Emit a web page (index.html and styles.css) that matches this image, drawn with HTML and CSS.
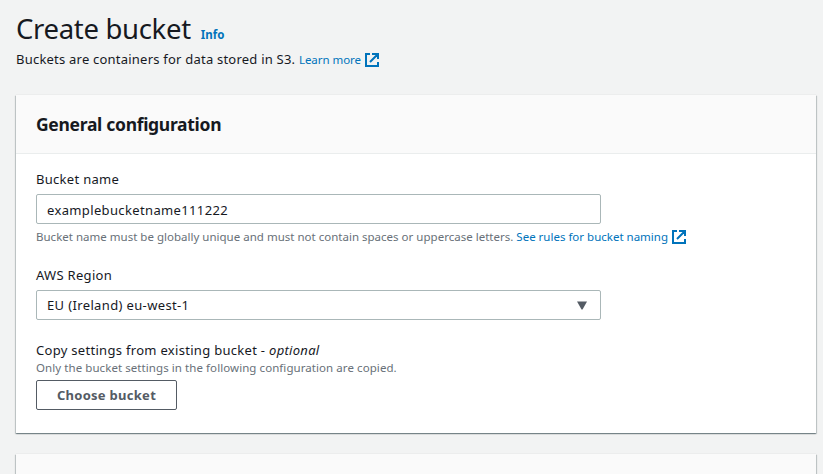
FILE: index.html
```html
<!DOCTYPE html>
<html lang="en">
<head>
<meta charset="utf-8">
<title>Create bucket</title>
<link rel="stylesheet" href="styles.css">
</head>
<body>
<main>
<header class="page-header">
<div class="title-row"><h1>Create bucket</h1><a class="info">Info</a></div>
<p class="intro">Buckets are containers for data stored in S3. <a class="link">Learn more<svg class="ext" viewBox="0 0 16 16"><path d="M6 2H2v12h12v-4M8 2h6v5M13.500 2.500L6 10"/></svg></a></p>
</header>
<section class="card">
<h2>General configuration</h2>
<div class="card-body">
<div class="field name"><label>Bucket name</label><div class="control">examplebucketname111222</div><p class="hint">Bucket name must be globally unique and must not contain spaces or uppercase letters. <a class="link">See rules for bucket naming<svg class="ext" viewBox="0 0 16 16"><path d="M6 2H2v12h12v-4M8 2h6v5M13.500 2.500L6 10"/></svg></a></p></div>
<div class="field region"><label>AWS Region</label><div class="control select"><span>EU (Ireland) eu-west-1</span><svg class="caret" viewBox="0 0 12 9"><path d="M1 .5h10L6.500 8.500h-1z"/></svg></div></div>
<div class="field copy"><label>Copy settings from existing bucket - <em>optional</em></label><p class="hint">Only the bucket settings in the following configuration are copied.</p><button>Choose bucket</button></div>
</div>
</section>
<section class="card next"></section>
</main>
</body>
</html>
```
FILE: styles.css
```css
* { box-sizing: border-box; }
body { margin: 0; background: #f2f3f3; color: #16191f; font: 13px/20px "Noto Sans", sans-serif; letter-spacing: .3px; }
main { height: 474px; overflow: hidden; padding: 10px 7px 0 16px; }
h1, h2, p { margin: 0; font-weight: 400; }
.page-header { height: 85px; }
.title-row { display: flex; align-items: baseline; gap: 10px; height: 39px; }
h1 { font-size: 27.500px; line-height: 38px; letter-spacing: -.32px; }
.info { font-size: 11.500px; font-weight: 700; letter-spacing: 0; color: #0073bb; }
.intro { letter-spacing: .22px; }
.link { color: #0073bb; font-size: 11.500px; letter-spacing: 0; }
.intro .link { letter-spacing: -.04px; }
.ext { width: 16px; height: 16px; margin-left: 3px; vertical-align: -4px; fill: none; stroke: currentColor; stroke-width: 2; }
.card { height: 338px; background: #fff; box-shadow: 0 1px 1px rgba(0,28,36,.3), 1px 1px 1px rgba(0,28,36,.15), -1px 1px 1px rgba(0,28,36,.15), 0 0 1px rgba(0,28,36,.15); }
h2 { height: 59px; padding: 18px 20px; border-bottom: 1px solid #eaeded; background: #fafafa; font-size: 17.500px; line-height: 22px; font-weight: 700; letter-spacing: -.3px; }
.card-body { padding: 15px 20px; }
.field { display: flex; flex-direction: column; align-items: flex-start; }
.name { height: 96px; }
.region { height: 75px; }
label { height: 25px; }
.control { width: 565px; height: 30px; padding: 5px 10px; border: 1px solid #aab7b8; border-radius: 2px; letter-spacing: .36px; }
.region .control { padding-top: 4px; }
.select { display: flex; justify-content: space-between; }
.caret { width: 12px; height: 9px; margin: 6px 2px; fill: #545b64; }
.hint { color: #687078; font-size: 11.500px; line-height: 18px; margin-top: 4px; letter-spacing: .01px; }
.copy label { height: 20px; }
.copy .hint { margin: -1px 0 3px; letter-spacing: .07px; }
button { width: 141px; height: 30px; padding: 0; background: #fff; border: 1px solid #545b64; border-radius: 2px; color: #545b64; font: 700 13px/20px "Noto Sans", sans-serif; letter-spacing: .28px; }
.next { margin-top: 21px; background: #fafafa; height: 20px; }
```
